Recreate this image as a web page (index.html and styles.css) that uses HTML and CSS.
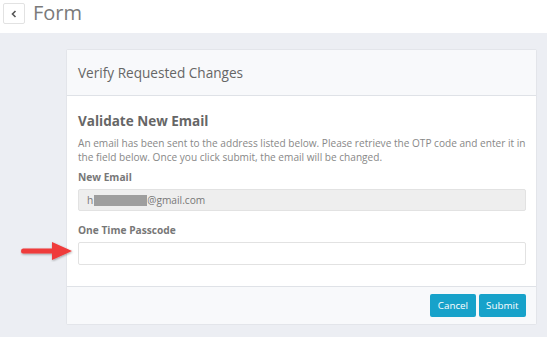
FILE: index.html
```html
<!DOCTYPE html>
<html>
<head>
<meta charset="utf-8">
<link rel="stylesheet" href="styles.css">
</head>
<body>
<header class="topbar">
  <button class="back" aria-label="Back">
    <svg width="8" height="8" viewBox="0 0 8 8"><path d="M5.5 1 L2.5 4 L5.5 7" fill="none" stroke="#555" stroke-width="1.6"/></svg>
  </button>
  <h1 class="title">Form</h1>
</header>
<main class="main">
  <div class="arrow">
    <svg width="56" height="22" viewBox="0 0 56 22">
      <defs><filter id="sh" x="-20%" y="-40%" width="140%" height="180%"><feDropShadow dx="0.5" dy="1" stdDeviation="0.8" flood-color="#000" flood-opacity="0.35"/></filter></defs>
      <path d="M3 8.5 H32 V2 L52 11 L32 20 V13.5 H3 Q1 13.5 1 11 Q1 8.5 3 8.5 Z" fill="#ef3b3b" filter="url(#sh)"/>
    </svg>
  </div>
  <section class="card">
    <div class="card-head">Verify Requested Changes</div>
    <div class="card-body">
      <h2 class="sub">Validate New Email</h2>
      <p class="desc">An email has been sent to the address listed below. Please retrieve the OTP code and enter it in the field below. Once you click submit, the email will be changed.</p>
      <label class="lbl">New Email</label>
      <div class="input readonly">h<span class="redact"></span>@gmail.com</div>
      <label class="lbl lbl2">One Time Passcode</label>
      <div class="input"></div>
    </div>
    <div class="card-foot">
      <button class="btn">Cancel</button>
      <button class="btn">Submit</button>
    </div>
  </section>
</main>
</body>
</html>
```
FILE: styles.css
```css
* { box-sizing: border-box; }
html, body { margin: 0; padding: 0; }
body {
  width: 547px;
  height: 337px;
  overflow: hidden;
  font-family: "Open Sans", "Liberation Sans", sans-serif;
  background: #eceef3;
}
.topbar {
  height: 33px;
  background: #fff;
  display: flex;
  align-items: flex-start;
  padding: 3px 0 0 3px;
}
.back {
  width: 22px;
  height: 21px;
  border: 1px solid #e2e2e2;
  background: #fff;
  border-radius: 2px;
  padding: 0;
  display: flex;
  align-items: center;
  justify-content: center;
}
.title {
  margin: 0 0 0 8px;
  font-weight: 400;
  font-size: 20px;
  line-height: 20px;
  color: #7a7a7a;
}
.main {
  position: relative;
  padding: 16px 10px 0 66px;
}
.arrow {
  position: absolute;
  left: 20px;
  top: 207px;
}
.card {
  width: 471px;
  background: #fff;
  border: 1px solid #e3e5ea;
  border-radius: 2px;
}
.card-head {
  height: 46px;
  background: #f8f9fb;
  border-bottom: 1px solid #dfe2e7;
  padding: 13px 11px 0;
  font-size: 13.6px;
  color: #666;
}
.card-body {
  padding: 15px 10px 21px 11px;
}
.sub {
  margin: 0;
  font-size: 13.5px;
  font-weight: 700;
  color: #666;
  line-height: 20px;
}
.desc {
  margin: 5px 0 0;
  font-size: 10.1px;
  line-height: 14px;
  color: #888;
}
.lbl {
  display: block;
  margin-top: 6px;
  font-size: 10.2px;
  font-weight: 700;
  color: #777;
  line-height: 14px;
}
.lbl2 { margin-top: 12px; }
.input {
  margin-top: 5px;
  height: 23px;
  border: 1px solid #e2e2e2;
  border-radius: 2px;
  background: #fff;
  font-size: 10.2px;
  color: #777;
  padding: 0 0 0 8px;
  display: flex;
  align-items: center;
}
.input.readonly {
  background: #eeeeee;
  height: 22px;
}
.redact {
  display: inline-block;
  width: 53px;
  height: 11px;
  margin-left: 1px;
  background: #9e9e9e;
}
.card-foot {
  height: 38px;
  background: #f8f9fb;
  border-top: 1px solid #dfe2e7;
  display: flex;
  justify-content: flex-end;
  align-items: flex-start;
  gap: 3px;
  padding: 7px 10px 0 0;
}
.btn {
  height: 23px;
  border: none;
  border-radius: 2px;
  background: #17a2ca;
  color: #fff;
  font-family: "Open Sans", "Liberation Sans", sans-serif;
  font-size: 9.8px;
  padding: 0 7.5px;
}
```
